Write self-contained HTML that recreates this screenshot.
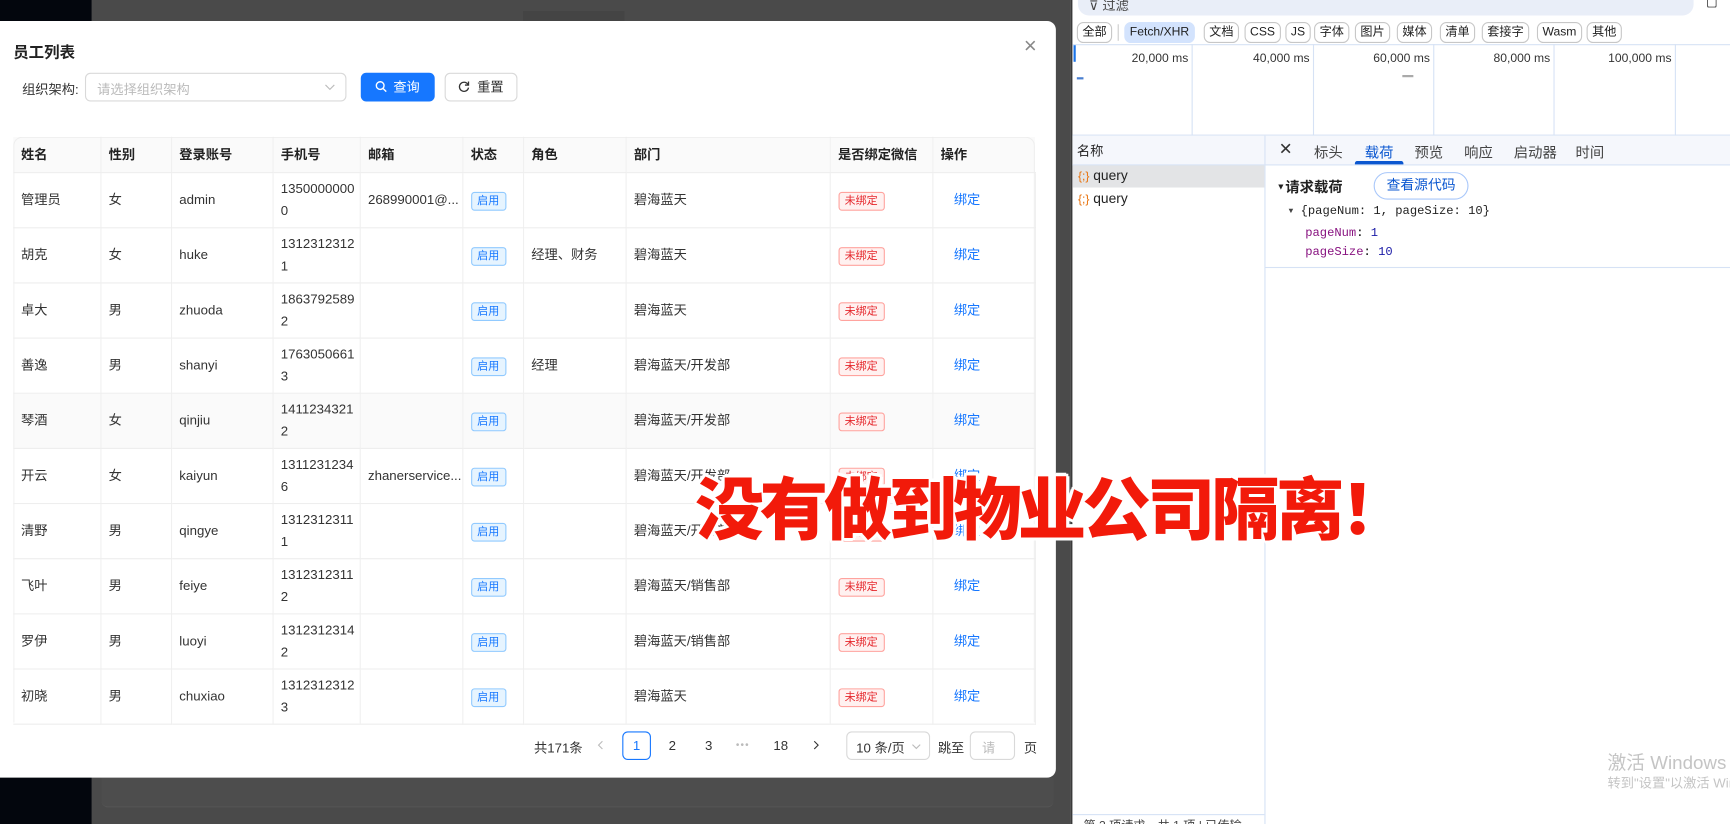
<!DOCTYPE html>
<html><head><meta charset="utf-8">
<style>
*{box-sizing:border-box;margin:0;padding:0}
html,body{width:1730px;height:824px;overflow:hidden;background:#4a4a4a}
body{font-family:"Liberation Sans","Noto Sans CJK SC",sans-serif;}
#w{position:absolute;left:0;top:0;width:1568px;height:747px;transform:scale(1.10332,1.10308);transform-origin:0 0;background:#4a4a4a;overflow:hidden}
.a{position:absolute}
.modal{left:0;top:19px;width:957px;height:686px;background:#fff;border-radius:0 8px 8px 0}
table{border-collapse:collapse;position:absolute;left:12px;top:124px;width:926px;font-size:12px;color:#333;table-layout:fixed}
td,th{border-bottom:1px solid #eee;border-right:1px solid #f0f0f0;text-align:left;padding:0 7px;vertical-align:middle;overflow:hidden;white-space:nowrap}
th{height:32px;background:#fafafa;font-weight:bold;color:#222}
td{height:50px;line-height:20px}
tr.h td{background:#fafafa}
.tg{display:inline-block;border:1px solid #91caff;background:#e6f4ff;color:#1677ff;font-size:10px;line-height:15px;padding:0 5px;border-radius:3px}
.tr{display:inline-block;border:1px solid #ffa39e;background:#fff1f0;color:#e5262b;font-size:10px;line-height:15px;padding:0 5px;border-radius:3px}
.lk{color:#1677ff;padding-left:19px}
.pg{font-size:12px;color:#333;white-space:nowrap}
.chip{position:absolute;top:20px;height:19px;border:1px solid #c7c7c7;border-radius:6px;font-size:11px;line-height:17px;padding:0 4px;color:#222;background:#fff;white-space:nowrap}
.tl{position:absolute;top:47px;font-size:11px;color:#333;text-align:right;width:100px}
.vl{position:absolute;top:40px;height:83px;width:1px;background:#d6e2f5}
.tab{position:absolute;top:128px;font-size:13px;color:#444}
</style></head><body><div id="w">
<div class="a" style="left:0;top:0;width:83px;height:747px;background:#03060d"></div>
<div class="a" style="left:474px;top:10px;width:92px;height:9px;background:#444"></div>
<div class="a" style="left:92px;top:705px;width:863px;height:27px;background:#4d4d4d;border-bottom:1px solid #555;border-radius:0 0 6px 6px"></div>
<div class="a modal"></div>
<div class="a" style="left:12px;top:37px;font-size:14px;font-weight:bold;color:#222">员工列表</div>
<div class="a" style="left:928px;top:31px;font-size:20px;color:#888;font-weight:300">×</div>
<div class="a" style="left:20px;top:72px;font-size:12px;color:#333">组织架构:</div>
<div class="a" style="left:77px;top:66px;width:237px;height:26px;border:1px solid #d9d9d9;border-radius:5px;font-size:12px;color:#bbb;padding:5px 10px">请选择组织架构<svg class="a" style="right:9px;top:9px" width="10" height="6" viewBox="0 0 10 6"><path d="M1 1l4 4 4-4" fill="none" stroke="#bbb"/></svg></div>
<div class="a" style="left:327px;top:66px;width:67px;height:26px;background:#1677ff;border-radius:5px;color:#fff;font-size:12px;line-height:26px;text-align:center"><svg width="11" height="11" viewBox="0 0 12 12" style="vertical-align:-1px;margin-right:5px"><circle cx="5" cy="5" r="3.8" fill="none" stroke="#fff" stroke-width="1.4"/><path d="M8 8l3 3" stroke="#fff" stroke-width="1.4"/></svg>查询</div>
<div class="a" style="left:403px;top:66px;width:66px;height:26px;border:1px solid #d9d9d9;border-radius:5px;color:#333;font-size:12px;line-height:24px;text-align:center"><svg width="11" height="11" viewBox="0 0 12 12" style="vertical-align:-1px;margin-right:6px"><path d="M10 4A4.5 4.5 0 1 0 10.5 7" fill="none" stroke="#333" stroke-width="1.3"/><path d="M10.5 1v3.5H7" fill="none" stroke="#333" stroke-width="1.3"/></svg>重置</div>
<table>
<colgroup><col style="width:79px"><col style="width:64px"><col style="width:92px"><col style="width:79px"><col style="width:93px"><col style="width:55px"><col style="width:93px"><col style="width:185px"><col style="width:93px"><col style="width:93px"></colgroup>
<tr><th>姓名</th><th>性别</th><th>登录账号</th><th>手机号</th><th>邮箱</th><th>状态</th><th>角色</th><th>部门</th><th>是否绑定微信</th><th style="border-right:none">操作</th></tr>
<tr><td>管理员</td><td>女</td><td>admin</td><td>1350000000<br>0</td><td>268990001@...</td><td><span class="tg">启用</span></td><td></td><td>碧海蓝天</td><td><span class="tr">未绑定</span></td><td class="lk">绑定</td></tr>
<tr><td>胡克</td><td>女</td><td>huke</td><td>1312312312<br>1</td><td></td><td><span class="tg">启用</span></td><td>经理、财务</td><td>碧海蓝天</td><td><span class="tr">未绑定</span></td><td class="lk">绑定</td></tr>
<tr><td>卓大</td><td>男</td><td>zhuoda</td><td>1863792589<br>2</td><td></td><td><span class="tg">启用</span></td><td></td><td>碧海蓝天</td><td><span class="tr">未绑定</span></td><td class="lk">绑定</td></tr>
<tr><td>善逸</td><td>男</td><td>shanyi</td><td>1763050661<br>3</td><td></td><td><span class="tg">启用</span></td><td>经理</td><td>碧海蓝天/开发部</td><td><span class="tr">未绑定</span></td><td class="lk">绑定</td></tr>
<tr class="h"><td>琴酒</td><td>女</td><td>qinjiu</td><td>1411234321<br>2</td><td></td><td><span class="tg">启用</span></td><td></td><td>碧海蓝天/开发部</td><td><span class="tr">未绑定</span></td><td class="lk">绑定</td></tr>
<tr><td>开云</td><td>女</td><td>kaiyun</td><td>1311231234<br>6</td><td>zhanerservice...</td><td><span class="tg">启用</span></td><td></td><td>碧海蓝天/开发部</td><td><span class="tr">未绑定</span></td><td class="lk">绑定</td></tr>
<tr><td>清野</td><td>男</td><td>qingye</td><td>1312312311<br>1</td><td></td><td><span class="tg">启用</span></td><td></td><td>碧海蓝天/开发部</td><td><span class="tr">未绑定</span></td><td class="lk">绑定</td></tr>
<tr><td>飞叶</td><td>男</td><td>feiye</td><td>1312312311<br>2</td><td></td><td><span class="tg">启用</span></td><td></td><td>碧海蓝天/销售部</td><td><span class="tr">未绑定</span></td><td class="lk">绑定</td></tr>
<tr><td>罗伊</td><td>男</td><td>luoyi</td><td>1312312314<br>2</td><td></td><td><span class="tg">启用</span></td><td></td><td>碧海蓝天/销售部</td><td><span class="tr">未绑定</span></td><td class="lk">绑定</td></tr>
<tr><td>初晓</td><td>男</td><td>chuxiao</td><td>1312312312<br>3</td><td></td><td><span class="tg">启用</span></td><td></td><td>碧海蓝天</td><td><span class="tr">未绑定</span></td><td class="lk">绑定</td></tr>
</table>
<div class="a" style="left:12px;top:124px;width:926px;height:531px;border:1px solid #eee;border-bottom:none;border-radius:8px 8px 0 0;pointer-events:none"></div>
<div class="a pg" style="left:484px;top:669px">共171条</div>
<svg class="a" style="left:541px;top:671px" width="6" height="9" viewBox="0 0 6 9"><path d="M5 1L1.5 4.5 5 8" fill="none" stroke="#bbb"/></svg>
<div class="a pg" style="left:564px;top:663px;width:26px;height:26px;border:1px solid #1677ff;border-radius:5px;color:#1677ff;text-align:center;line-height:24px">1</div>
<div class="a pg" style="left:606px;top:669px">2</div>
<div class="a pg" style="left:639px;top:669px">3</div>
<div class="a pg" style="left:667px;top:670px;color:#bbb;font-size:9px;letter-spacing:1px">•••</div>
<div class="a pg" style="left:701px;top:669px">18</div>
<svg class="a" style="left:737px;top:671px" width="6" height="9" viewBox="0 0 6 9"><path d="M1 1l3.5 3.5L1 8" fill="none" stroke="#333"/></svg>
<div class="a pg" style="left:767px;top:663px;width:76px;height:26px;border:1px solid #d9d9d9;border-radius:5px;padding:5px 8px">10 条/页<svg class="a" style="right:7px;top:10px" width="9" height="6" viewBox="0 0 9 6"><path d="M1 1l3.5 3.5L8 1" fill="none" stroke="#bbb"/></svg></div>
<div class="a pg" style="left:850px;top:669px">跳至</div>
<div class="a pg" style="left:879px;top:663px;width:41px;height:26px;border:1px solid #d9d9d9;border-radius:5px;color:#bbb;padding:5px 10px">请</div>
<div class="a pg" style="left:928px;top:669px">页</div>

<!-- devtools -->
<div class="a" style="left:970px;top:0;width:598px;height:747px;background:#fff;border-left:2px solid #3a3a3a"></div>
<div class="a" style="left:977px;top:0;width:558px;height:14px;background:#e9eef8;border-radius:0 0 10px 10px;font-size:12px;color:#444;padding-left:10px;line-height:10px">⊽ 过滤</div>
<div class="a" style="left:1547px;top:0;width:9px;height:7px;border:1px solid #555;border-top:none;border-radius:0 0 2px 2px"></div>
<div class="chip" style="left:976px">全部</div>
<div class="a" style="left:1013px;top:22px;width:1px;height:15px;background:#ccc"></div>
<div class="chip" style="left:1019px;background:#d3e3fd;border-color:#d3e3fd">Fetch/XHR</div>
<div class="chip" style="left:1091px">文档</div>
<div class="chip" style="left:1128px">CSS</div>
<div class="chip" style="left:1165px">JS</div>
<div class="chip" style="left:1191px">字体</div>
<div class="chip" style="left:1228px">图片</div>
<div class="chip" style="left:1266px">媒体</div>
<div class="chip" style="left:1305px">清单</div>
<div class="chip" style="left:1343px">套接字</div>
<div class="chip" style="left:1393px">Wasm</div>
<div class="chip" style="left:1438px">其他</div>
<div class="a" style="left:972px;top:40px;width:596px;height:1px;background:#d6e2f5"></div>
<div class="vl" style="left:1080px"></div><div class="vl" style="left:1190px"></div><div class="vl" style="left:1299px"></div><div class="vl" style="left:1408px"></div><div class="vl" style="left:1518px"></div>
<div class="a" style="left:973px;top:41px;width:2px;height:15px;background:#1a73e8"></div>
<div class="a" style="left:976px;top:70px;width:6px;height:2px;background:#4a7fd0"></div>
<div class="a" style="left:1271px;top:68px;width:10px;height:2px;background:#aaa"></div>
<div class="tl" style="left:977px">20,000 ms</div>
<div class="tl" style="left:1087px">40,000 ms</div>
<div class="tl" style="left:1196px">60,000 ms</div>
<div class="tl" style="left:1305px">80,000 ms</div>
<div class="tl" style="left:1415px">100,000 ms</div>
<div class="a" style="left:972px;top:122px;width:596px;height:1px;background:#d6e2f5"></div>
<div class="a" style="left:972px;top:123px;width:174px;height:27px;background:#f5f7fc;border-bottom:1px solid #d6e2f5;font-size:12px;color:#222;padding:5px 4px">名称</div>
<div class="a" style="left:1146px;top:123px;width:1px;height:624px;background:#d6e2f5"></div>
<div class="a" style="left:1147px;top:123px;width:421px;height:27px;background:#f5f7fc;border-bottom:1px solid #d6e2f5"></div>
<div class="tab" style="left:1159px;font-size:15px;top:126px;color:#333">✕</div>
<div class="tab" style="left:1191px">标头</div>
<div class="tab" style="left:1237px;color:#0b57d0">载荷</div>
<div class="a" style="left:1228px;top:146px;width:44px;height:3px;background:#0b57d0;border-radius:2px 2px 0 0"></div>
<div class="tab" style="left:1282px">预览</div>
<div class="tab" style="left:1327px">响应</div>
<div class="tab" style="left:1372px">启动器</div>
<div class="tab" style="left:1428px">时间</div>
<div class="a" style="left:972px;top:150px;width:174px;height:20px;background:#e3e4e6"></div>
<div class="a" style="left:977px;top:152px;font-size:12.5px;color:#222"><span style="color:#e8710a;font-size:11px">{;}</span> query</div>
<div class="a" style="left:977px;top:173px;font-size:12.5px;color:#222"><span style="color:#e8710a;font-size:11px">{;}</span> query</div>
<div class="a" style="left:1157px;top:159px;font-size:13px;font-weight:bold;color:#222"><span style="font-size:8px;vertical-align:2px">▼</span>请求载荷</div>
<div class="a" style="left:1245px;top:156px;width:86px;height:25px;border:1px solid #a8c7fa;border-radius:13px;color:#0b57d0;font-size:12.5px;text-align:center;line-height:23px">查看源代码</div>
<div class="a" style="left:1168px;top:186px;font-family:'Liberation Mono',monospace;font-size:11px;color:#222"><span style="font-size:7px;color:#444;vertical-align:1px">▼</span> {pageNum: 1, pageSize: 10}</div>
<div class="a" style="left:1183px;top:206px;font-family:'Liberation Mono',monospace;font-size:11px"><span style="color:#881280">pageNum</span>: <span style="color:#1a1aa6">1</span></div>
<div class="a" style="left:1183px;top:223px;font-family:'Liberation Mono',monospace;font-size:11px"><span style="color:#881280">pageSize</span>: <span style="color:#1a1aa6">10</span></div>
<div class="a" style="left:1147px;top:242px;width:421px;height:1px;background:#d6e2f5"></div>
<div class="a" style="left:972px;top:738px;width:174px;height:1px;background:#d6e2f5"></div>
<div class="a" style="left:982px;top:740px;font-size:11px;color:#444;white-space:nowrap">第 2 项请求，共 1 项 | 已传输</div>
<div class="a" style="left:1457px;top:677px;font-size:17px;color:#c4c4c4;white-space:nowrap">激活 Windows</div>
<div class="a" style="left:1457px;top:701px;font-size:12px;color:#c4c4c4;white-space:nowrap">转到"设置"以激活 Windows。</div>

<div class="a" style="left:630px;top:412px;font-size:62px;font-weight:900;color:#f21a0a;letter-spacing:-3.5px;white-space:nowrap;text-shadow:3px 0 #fff,-3px 0 #fff,0 3px #fff,0 -3px #fff,2px 2px #fff,-2px -2px #fff,2px -2px #fff,-2px 2px #fff;font-family:'Noto Sans CJK SC',sans-serif">没有做到物业公司隔离！</div>
</div></body></html>
